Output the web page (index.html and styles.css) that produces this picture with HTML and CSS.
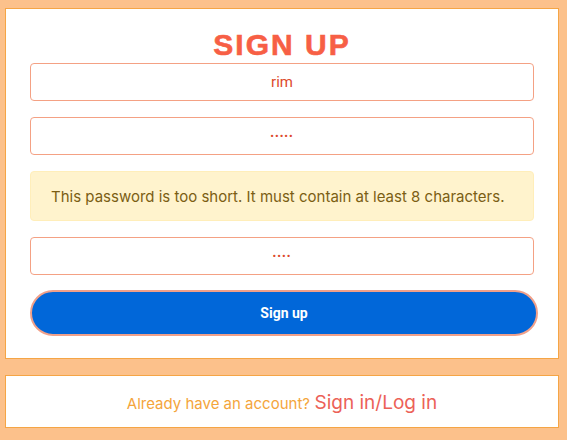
FILE: index.html
```html
<!DOCTYPE html>
<html>
<head>
<meta charset="utf-8">
<link rel="stylesheet" href="styles.css">
</head>
<body>
<main class="page">
  <section class="card signup">
    <h1 class="title">SIGN UP</h1>
    <form class="form">
      <input class="field" type="text" value="rim">
      <input class="field pw" type="password" value="12345">
      <div class="alert">This password is too short. It must contain at least 8 characters.</div>
      <input class="field pw" type="password" value="1234">
      <button class="btn" type="button">Sign up</button>
    </form>
  </section>
  <section class="card footer">
    <p class="switch"><span class="muted">Already have an account?</span> <a class="link" href="#">Sign in/Log in</a></p>
  </section>
</main>
</body>
</html>
```
FILE: styles.css
```css
html, body {
  margin: 0;
  padding: 0;
  background: #fcc18b;
}
.page {
  padding: 8px 8px 0 5px;
  display: flex;
  flex-direction: column;
  gap: 16px;
  font-family: "Liberation Sans", Arial, sans-serif;
}
.card {
  background: #fff;
  border: 1px solid #f5a545;
  box-sizing: border-box;
  width: 554px;
}
.signup {
  height: 351px;
  padding: 19px 24px 0 24px;
}
.title {
  margin: 0 0 1px;
  text-align: center;
  font-family: "Liberation Sans", Arial, sans-serif;
  font-weight: 700;
  font-size: 30px;
  line-height: 34px;
  letter-spacing: 2px;
  color: #f75f45;
  -webkit-text-stroke: 0.6px #f75f45;
}
.form {
  display: flex;
  flex-direction: column;
  gap: 16px;
}
.field {
  box-sizing: border-box;
  height: 38px;
  width: 100%;
  margin: 0;
  border: 1px solid #f4a184;
  border-radius: 4px;
  text-align: center;
  font-family: Roboto, "Liberation Sans", sans-serif;
  font-size: 15px;
  color: #dd4a2c;
  background: #fff;
  outline: none;
}
.pw {
  font-size: 11px;
  letter-spacing: 1px;
}
.alert {
  box-sizing: border-box;
  height: 50px;
  padding: 0 20px;
  display: flex;
  align-items: center;
  background: #fff3cd;
  border: 1px solid #ffeeba;
  border-radius: 4px;
  color: #7b5e14;
  font-family: Inter, "Noto Sans", sans-serif;
  font-size: 15px;
}
.btn {
  box-sizing: border-box;
  margin-top: -1px;
  width: calc(100% + 4px);
  height: 46px;
  border: 2px solid #f0a08a;
  border-radius: 23px;
  background: #0167d9;
  color: #fff;
  font-family: Roboto, "Liberation Sans", sans-serif;
  font-weight: 700;
  font-size: 14px;
}
.footer {
  height: 53px;
  display: flex;
  align-items: center;
  justify-content: center;
}
.switch {
  margin: 2px 0 0;
  font-family: Inter, "Liberation Sans", sans-serif;
}
.muted {
  color: #f4a53b;
  font-size: 15px;
}
.link {
  color: #ec6157;
  font-size: 19px;
  text-decoration: none;
}
```
